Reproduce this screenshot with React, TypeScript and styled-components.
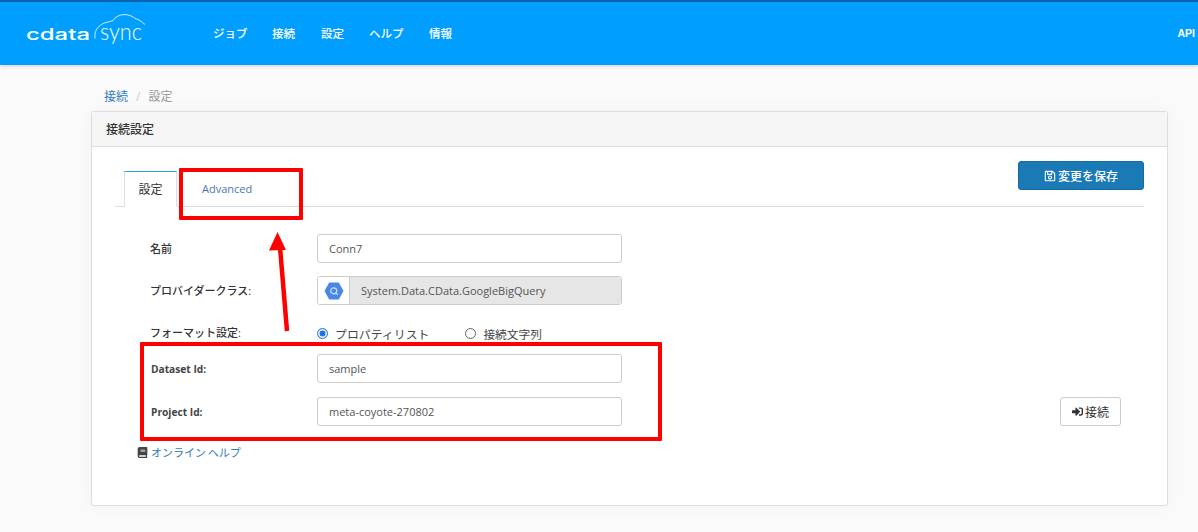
import React from "react";
import styled, { createGlobalStyle } from "styled-components";
import { FaRegSave, FaSignInAlt, FaBook } from "react-icons/fa";

const FONT = `"Open Sans", "Noto Sans CJK JP", sans-serif`;

const Global = createGlobalStyle`
  html, body { margin: 0; padding: 0; background: #fafafa; }
  body { width: 1198px; height: 532px; overflow: hidden; font-family: ${FONT}; font-size: 12px; color: #333; position: relative; }
  * { box-sizing: border-box; }
`;

const Header = styled.header`
  height: 65px;
  background: #009fff;
  border-top: 2px solid #0a65ad;
  box-shadow: 0 1px 4px rgba(0,0,0,.18);
  display: flex;
  align-items: center;
  padding: 0 3px 2px 26px;
  color: #fff;
`;
const Logo = styled.svg`
  width: 118px;
  height: 36px;
  margin-right: 69px;
  margin-top: -4px;
  flex: none;
  overflow: visible;
`;
const Nav = styled.nav`
  display: flex;
  gap: 21px;
  flex: 1;
`;
const NavItem = styled.a<{ $w?: number }>`
  font-size: 11.5px;
  font-weight: 500;
  color: #fff;
  width: ${p => (p.$w ? `${p.$w}px` : "auto")};
`;
const ApiLink = styled.a`
  font-family: "Liberation Sans", sans-serif;
  font-size: 10.5px;
  font-weight: 700;
  color: #fff;
`;

const Page = styled.main`
  padding: 23px 30px 0 91px;
`;
const Crumbs = styled.div`
  height: 23px;
  padding-left: 13px;
  display: flex;
  gap: 8px;
  font-size: 12px;
  line-height: 17px;
  color: #999;
`;
const CrumbLink = styled.a`
  color: #337ab7;
`;
const Sep = styled.span`
  color: #ccc;
`;

const Panel = styled.section`
  width: 1077px;
  height: 395px;
  background: #fff;
  border: 1px solid #ddd;
  border-radius: 3px;
  box-shadow: 0 0 18px rgba(0,0,0,.035);
`;
const PanelHead = styled.div`
  height: 35px;
  padding: 0 14px;
  display: flex;
  align-items: center;
  background: #f5f5f5;
  border-bottom: 1px solid #ddd;
  font-size: 12px;
  font-weight: 500;
  color: #333;
`;
const PanelBody = styled.div`
  padding: 14px 23px 0 23px;
`;
const TabBar = styled.div`
  height: 46px;
  border-bottom: 1px solid #ddd;
  padding-left: 9px;
  display: flex;
  align-items: flex-end;
  position: relative;
`;
const ActiveTab = styled.div`
  width: 53px;
  height: 36px;
  margin-bottom: -1px;
  background: #fff;
  border: 1px solid #ddd;
  border-top: 1px solid #2b9fe0;
  border-bottom: 1px solid #fff;
  display: flex;
  align-items: center;
  justify-content: center;
  font-size: 12px;
`;
const Tab = styled.a`
  height: 36px;
  padding: 1px 0 0 25px;
  display: flex;
  align-items: center;
  color: #4a76b0;
  font-size: 11px;
`;
const SaveButton = styled.button`
  position: absolute;
  right: 0;
  top: 0;
  width: 126px;
  height: 29px;
  background: #1a7ab5;
  border: 1px solid #166a9e;
  border-radius: 3px;
  color: #fff;
  font-family: ${FONT};
  font-size: 12px;
  font-weight: 500;
  display: flex;
  align-items: center;
  justify-content: center;
  gap: 2px;
  padding: 0;
`;

const Form = styled.div`
  padding: 27px 23px 0 35px;
`;
const Row = styled.div<{ $h: number; $mb: number }>`
  height: ${p => p.$h}px;
  margin-bottom: ${p => p.$mb}px;
  display: flex;
  align-items: center;
`;
const Label = styled.label`
  width: 167px;
  flex: none;
  font-size: 11px;
  font-weight: 500;
  color: #333;
  padding-bottom: 2px;
`;
const BoldLabel = styled(Label)`
  font-weight: 700;
  font-size: 10.2px;
  color: #444;
  padding-left: 1px;
  padding-bottom: 0;
`;
const Field = styled.div`
  width: 305px;
  height: 29px;
  padding: 0 11px;
  display: flex;
  align-items: center;
  background: #fff;
  border: 1px solid #ccc;
  border-radius: 3px;
  font-size: 11px;
  color: #555;
`;
const AddonField = styled.div`
  width: 305px;
  height: 29px;
  display: flex;
  border: 1px solid #ccc;
  border-radius: 3px;
  overflow: hidden;
`;
const Addon = styled.div`
  width: 32px;
  background: #fff;
  border-right: 1px solid #ccc;
  display: flex;
  align-items: center;
  justify-content: center;
`;
const AddonValue = styled.div`
  flex: 1;
  background: #e6e6e6;
  padding-left: 11px;
  display: flex;
  align-items: center;
  font-size: 11px;
  color: #555;
`;
const RadioRow = styled.div`
  display: flex;
  align-items: center;
  padding-top: 1px;
`;
const Radio = styled.span<{ $on?: boolean; $gap: number }>`
  width: 11px;
  height: 11px;
  border-radius: 50%;
  flex: none;
  margin-right: ${p => p.$gap}px;
  background: #fff;
  border: 1px solid ${p => (p.$on ? "#1a73e8" : "#666")};
  box-shadow: ${p => (p.$on ? "inset 0 0 0 1.5px #fff, inset 0 0 0 6px #1a73e8" : "none")};
`;
const RadioText = styled.span<{ $mr?: number; $size: number }>`
  font-size: ${p => p.$size}px;
  color: #444;
  margin-right: ${p => p.$mr ?? 0}px;
`;
const ConnectButton = styled.button`
  margin-left: auto;
  width: 61px;
  height: 29px;
  background: #fff;
  border: 1px solid #ccc;
  border-radius: 3px;
  color: #333;
  font-family: ${FONT};
  font-size: 12px;
  display: flex;
  align-items: center;
  justify-content: center;
  gap: 2px;
  padding: 0;
`;
const Help = styled.div`
  margin-left: 22px;
  margin-top: 18px;
  display: flex;
  align-items: center;
  gap: 3px;
  color: #444;
  font-size: 11px;
`;
const HelpLink = styled.a`
  color: #337ab7;
  font-size: 11px;
  word-spacing: -1px;
`;

const RedBox = styled.div<{ $x: number; $y: number; $w: number; $h: number }>`
  position: absolute;
  left: ${p => p.$x}px;
  top: ${p => p.$y}px;
  width: ${p => p.$w}px;
  height: ${p => p.$h}px;
  border: 4px solid #fe0000;
  border-radius: 1px;
  pointer-events: none;
`;
const Arrow = styled.svg`
  position: absolute;
  left: 260px;
  top: 225px;
  width: 40px;
  height: 110px;
`;

const BigQueryIcon = () => (
  <svg width="20" height="18" viewBox="0 0 20 18">
    <path d="M5.2 0.5h9.6L19.5 9l-4.7 8.5H5.2L0.5 9z" fill="#4a86e8" />
    <circle cx="9.7" cy="8.8" r="3" fill="none" stroke="#cfe0fb" strokeWidth="1.2" />
    <path d="M11.8 10.9l2 2" stroke="#cfe0fb" strokeWidth="1.3" />
  </svg>
);

export default function App() {
  return (
    <>
      <Global />
      <Header>
        <Logo viewBox="0 0 118 36">
          <text x="0" y="26.500" fontFamily="Inter, sans-serif" fontSize="16" fontWeight="500" fill="#fff" textLength="64" lengthAdjust="spacingAndGlyphs">cdata</text>
          <path d="M69 25.500C68.500 20 70 15.500 74 12.500C76 11 78 10 80 9.500C83 9 85 8 87 7.500C89 4 93 2 98 1.500C103 1.500 107 3.500 109 5.500C113 6.500 116 9 119 11.500" fill="none" stroke="#fff" strokeWidth=".8" />
          <text x="74" y="27" fontFamily="Lato, sans-serif" fontSize="24" fontWeight="300" fill="#fff" textLength="42" lengthAdjust="spacingAndGlyphs">sync</text>
        </Logo>
        <Nav>
          <NavItem $w={38}>ジョブ</NavItem>
          <NavItem $w={28}>接続</NavItem>
          <NavItem $w={27}>設定</NavItem>
          <NavItem $w={39}>ヘルプ</NavItem>
          <NavItem>情報</NavItem>
        </Nav>
        <ApiLink>API</ApiLink>
      </Header>
      <Page>
        <Crumbs>
          <CrumbLink>接続</CrumbLink>
          <Sep>/</Sep>
          <span>設定</span>
        </Crumbs>
        <Panel>
          <PanelHead>接続設定</PanelHead>
          <PanelBody>
            <TabBar>
              <ActiveTab>設定</ActiveTab>
              <Tab>Advanced</Tab>
              <SaveButton><FaRegSave size={12} />変更を保存</SaveButton>
            </TabBar>
            <Form>
              <Row $h={29} $mb={13}>
                <Label>名前</Label>
                <Field>Conn7</Field>
              </Row>
              <Row $h={29} $mb={13}>
                <Label>プロバイダークラス:</Label>
                <AddonField>
                  <Addon><BigQueryIcon /></Addon>
                  <AddonValue>System.Data.CData.GoogleBigQuery</AddonValue>
                </AddonField>
              </Row>
              <Row $h={29} $mb={7}>
                <Label>フォーマット設定:</Label>
                <RadioRow>
                  <Radio $on $gap={7} />
                  <RadioText $size={11.9} $mr={36}>プロパティリスト</RadioText>
                  <Radio $gap={7} />
                  <RadioText $size={11.7}>接続文字列</RadioText>
                </RadioRow>
              </Row>
              <Row $h={29} $mb={14}>
                <BoldLabel>Dataset Id:</BoldLabel>
                <Field>sample</Field>
              </Row>
              <Row $h={29} $mb={0}>
                <BoldLabel>Project Id:</BoldLabel>
                <Field>meta-coyote-270802</Field>
                <ConnectButton><FaSignInAlt size={11} />接続</ConnectButton>
              </Row>
            </Form>
            <Help><FaBook size={11} /><HelpLink>オンライン ヘルプ</HelpLink></Help>
          </PanelBody>
        </Panel>
      </Page>
      <RedBox $x={179} $y={168} $w={124} $h={52} />
      <RedBox $x={140} $y={342} $w={522} $h={99} />
      <Arrow viewBox="0 0 40 110">
        <path d="M27 106L20 22" stroke="#fe0000" strokeWidth="4.500" fill="none" />
        <path d="M17.500 7L9 25.500L26 25z" fill="#fe0000" />
      </Arrow>
    </>
  );
}
